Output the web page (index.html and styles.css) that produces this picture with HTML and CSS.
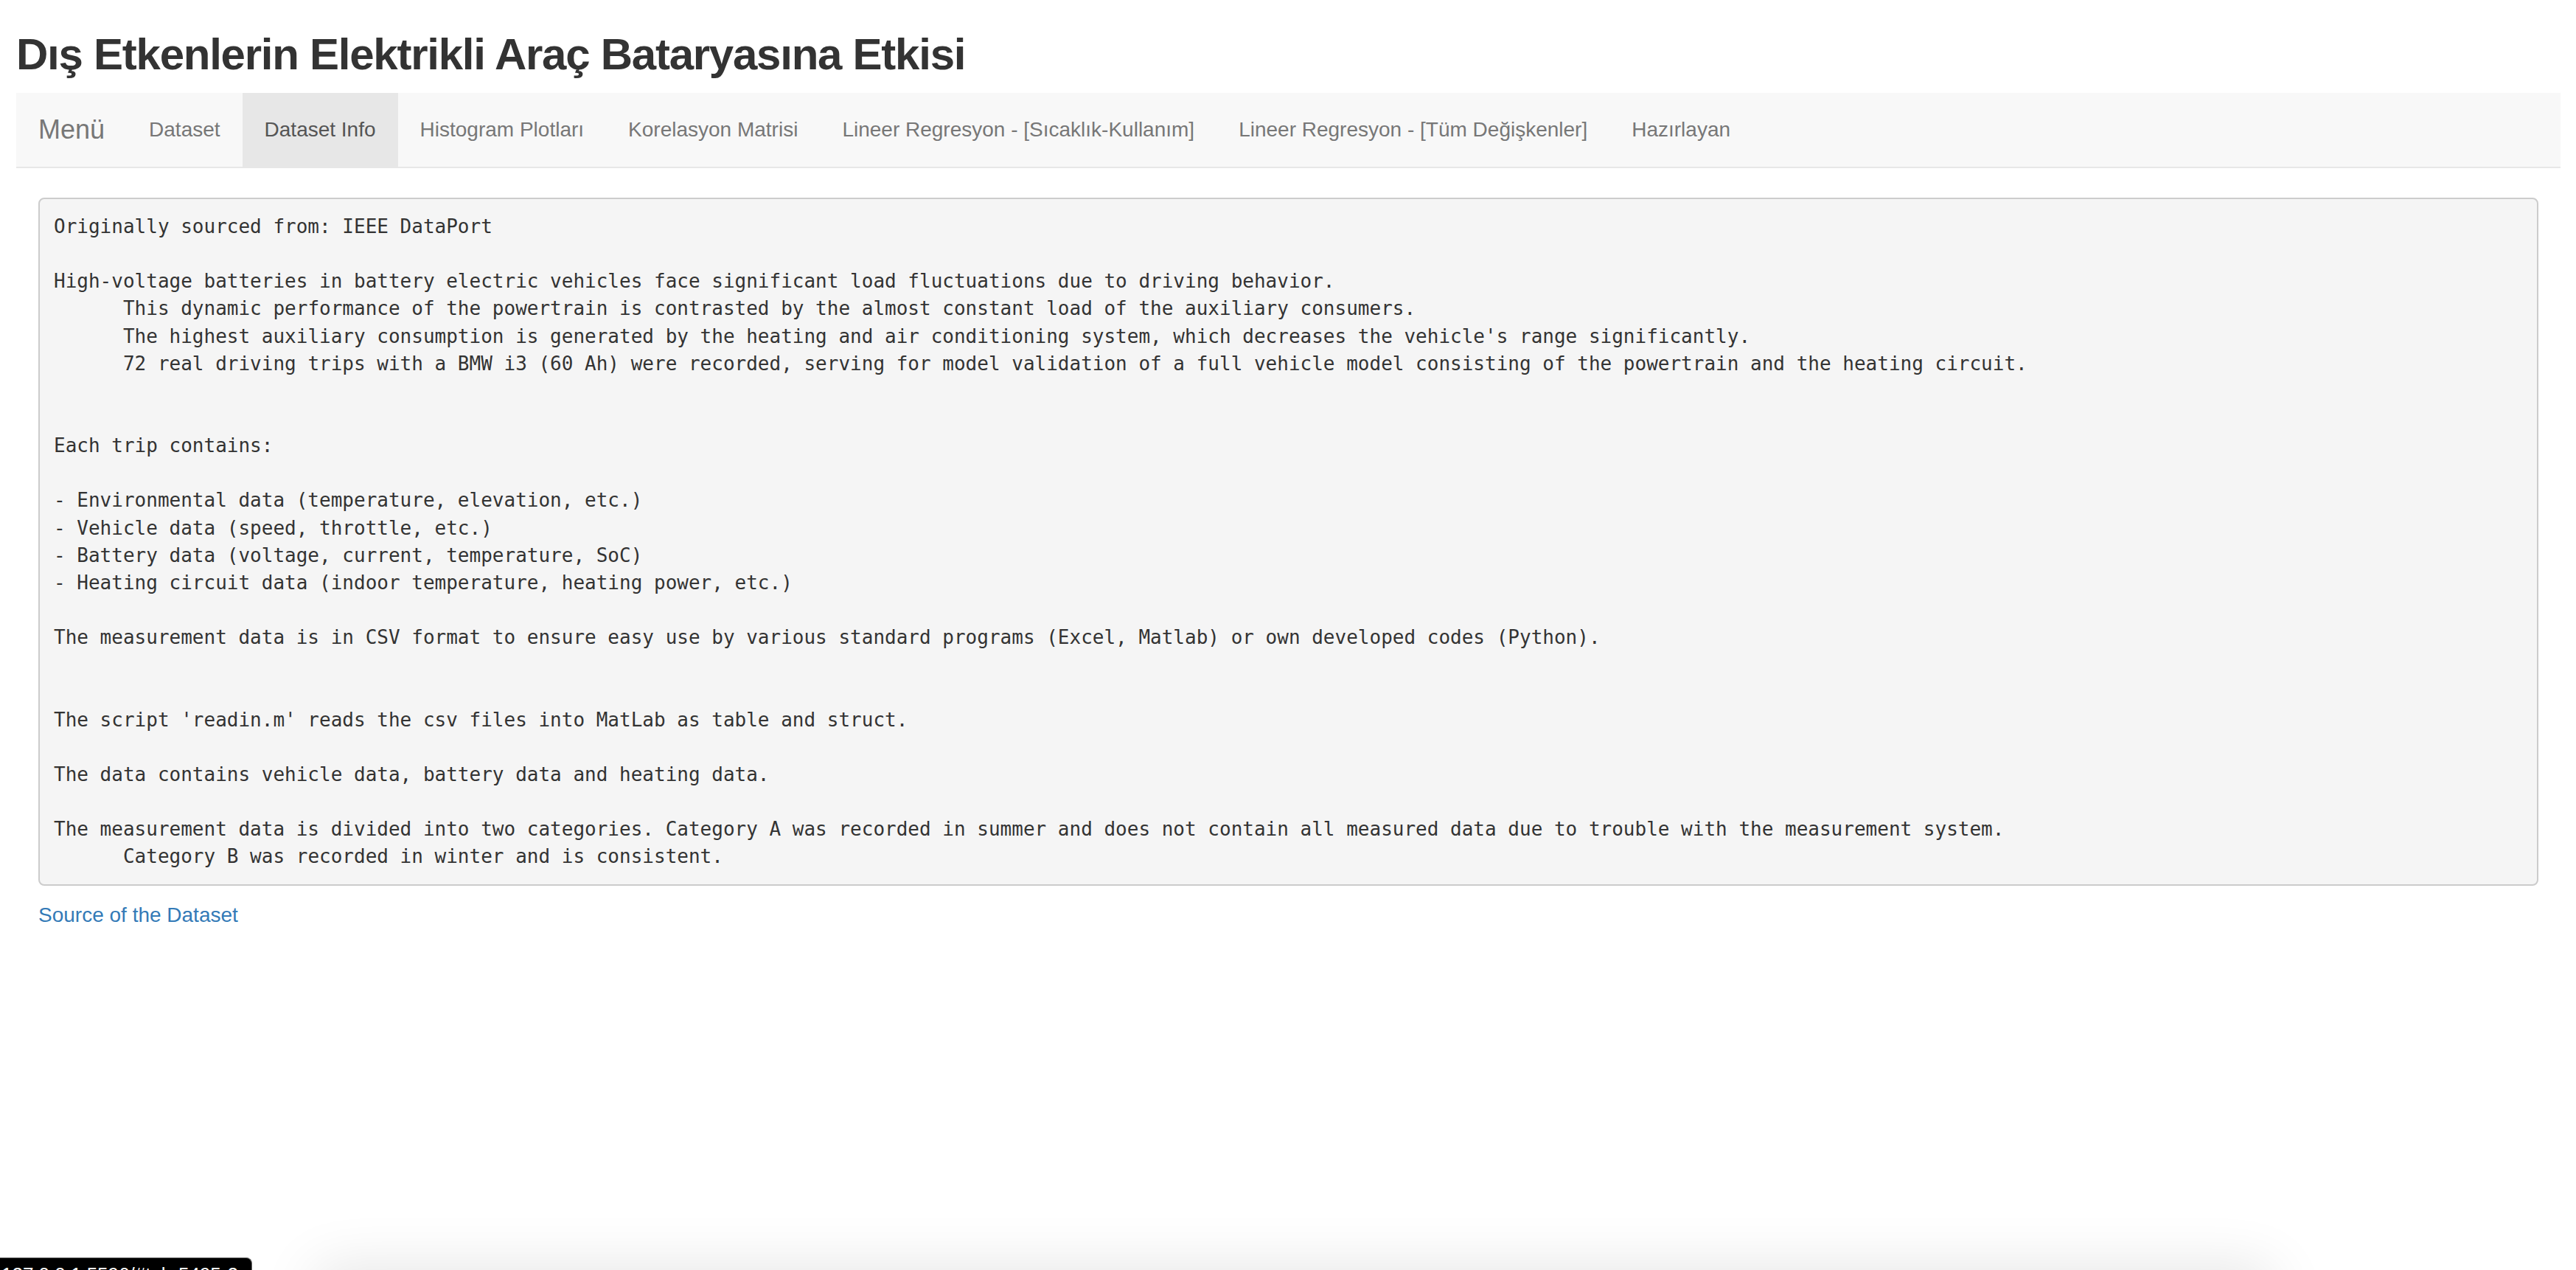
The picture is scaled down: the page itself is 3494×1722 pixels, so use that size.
FILE: index.html
```html
<!DOCTYPE html>
<html lang="tr">
<head>
<meta charset="utf-8">
<title>Dış Etkenlerin Elektrikli Araç Bataryasına Etkisi</title>
<link rel="stylesheet" href="styles.css">
</head>
<body>
<div class="page">
  <h2 class="title">Dış Etkenlerin Elektrikli Araç Bataryasına Etkisi</h2>
  <nav class="navbar">
    <span class="brand">Menü</span>
    <ul class="nav">
      <li><a href="#">Dataset</a></li>
      <li class="active"><a href="#">Dataset Info</a></li>
      <li><a href="#">Histogram Plotları</a></li>
      <li><a href="#">Korelasyon Matrisi</a></li>
      <li><a href="#">Lineer Regresyon - [Sıcaklık-Kullanım]</a></li>
      <li><a href="#">Lineer Regresyon - [Tüm Değişkenler]</a></li>
      <li><a href="#">Hazırlayan</a></li>
    </ul>
  </nav>
  <div class="content">
<pre class="info">Originally sourced from: IEEE DataPort

High-voltage batteries in battery electric vehicles face significant load fluctuations due to driving behavior.
      This dynamic performance of the powertrain is contrasted by the almost constant load of the auxiliary consumers.
      The highest auxiliary consumption is generated by the heating and air conditioning system, which decreases the vehicle's range significantly.
      72 real driving trips with a BMW i3 (60 Ah) were recorded, serving for model validation of a full vehicle model consisting of the powertrain and the heating circuit.


Each trip contains:

- Environmental data (temperature, elevation, etc.)
- Vehicle data (speed, throttle, etc.)
- Battery data (voltage, current, temperature, SoC)
- Heating circuit data (indoor temperature, heating power, etc.)

The measurement data is in CSV format to ensure easy use by various standard programs (Excel, Matlab) or own developed codes (Python).


The script 'readin.m' reads the csv files into MatLab as table and struct.

The data contains vehicle data, battery data and heating data.

The measurement data is divided into two categories. Category A was recorded in summer and does not contain all measured data due to trouble with the measurement system.
      Category B was recorded in winter and is consistent.</pre>
    <a class="source" href="#">Source of the Dataset</a>
  </div>
</div>
<div class="bottom-shade"></div>
<div class="status-bubble">127.0.0.1:5596/#tab-5495-2</div>
</body>
</html>
```

FILE: styles.css
```css
html, body {
  margin: 0;
  padding: 0;
  background: #ffffff;
}

body {
  font-family: "Liberation Sans", Arial, Helvetica, sans-serif;
  color: #333333;
}

.page {
  padding: 0 21px 0 22px;
}

.title {
  margin: 41px 0 19px 0;
  font-size: 60px;
  line-height: 66px;
  font-weight: 700;
  letter-spacing: -1.25px;
  color: #333333;
}

.navbar {
  display: flex;
  align-items: stretch;
  height: 100px;
  background: #f8f8f8;
  border-bottom: 2px solid #e7e7e7;
  margin-bottom: 40px;
}

.brand {
  padding: 0 30px;
  font-size: 36px;
  line-height: 100px;
  color: #777777;
}

.nav {
  display: flex;
  margin: 0;
  padding: 0;
  list-style: none;
}

.nav li a {
  display: block;
  padding: 0 30px;
  font-size: 28px;
  line-height: 100px;
  color: #777777;
  text-decoration: none;
}

.nav li.active a {
  background: #e7e7e7;
  color: #555555;
}

.content {
  padding: 0 30px;
}

.info {
  margin: 0 0 20px;
  padding: 19px;
  border: 2px solid #cccccc;
  border-radius: 8px;
  background: #f5f5f5;
  font-family: "DejaVu Sans Mono", Menlo, Consolas, monospace;
  font-size: 26px;
  line-height: 37.14px;
  color: #333333;
  white-space: pre-wrap;
  word-break: break-all;
}

.source {
  display: inline-block;
  font-size: 28px;
  line-height: 40px;
  color: #337ab7;
  text-decoration: none;
}

.bottom-shade {
  position: fixed;
  left: 440px;
  width: 2630px;
  top: calc(100% + 10px);
  height: 50px;
  background: #eeeeee;
  box-shadow: 0 0 80px 10px rgba(0, 0, 0, 0.12);
}

.status-bubble {
  position: fixed;
  left: 0;
  bottom: 0;
  height: 17px;
  overflow: hidden;
  box-sizing: border-box;
  padding: 7px 18px 0 2px;
  background: #000000;
  border-top: 1px solid #6a6a6a;
  border-right: 1px solid #6a6a6a;
  border-top-right-radius: 8px;
  color: #ffffff;
  font-family: "Liberation Sans", Arial, Helvetica, sans-serif;
  font-size: 26px;
  line-height: 30px;
  white-space: nowrap;
}
```
